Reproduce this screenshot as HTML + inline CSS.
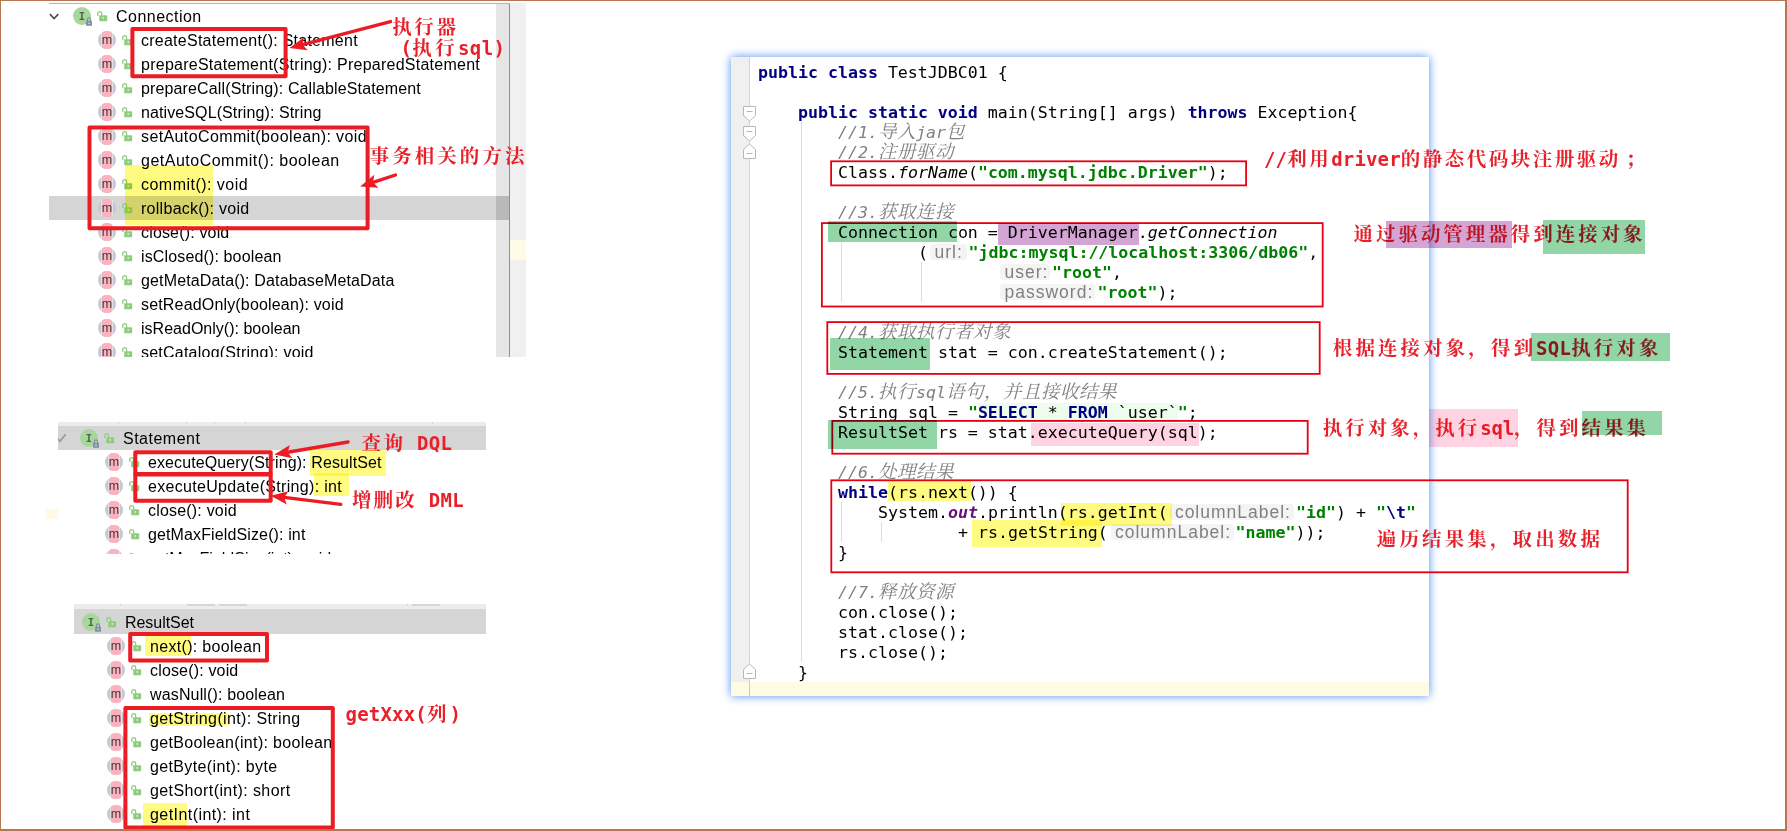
<!DOCTYPE html>
<html lang="zh-CN"><head><meta charset="utf-8"><title>JDBC API notes</title>
<style>
html,body{margin:0;padding:0}
body{width:1787px;height:831px;position:relative;overflow:hidden;background:#fff;font-family:"Liberation Sans","Noto Sans CJK SC",sans-serif}
.abs,.abs *{box-sizing:border-box}
.p{position:absolute;overflow:hidden}
.p div,.p span,.p svg{position:absolute}
.row{height:24px;line-height:24px;white-space:pre;font-size:16px;color:#000}
.t{top:0;height:24px;line-height:24px;white-space:pre}
.code{font-family:"DejaVu Sans Mono","Liberation Mono",monospace;font-size:16.6px;line-height:20px;height:20px;white-space:pre;color:#000}
.code span{position:static}
.code b{font-weight:bold}
.k{color:#000080;font-weight:bold}
.s{color:#008000;font-weight:bold}
.c{color:#808080;font-style:italic}
.cj{font-family:"Liberation Serif","Noto Serif CJK SC",serif;font-size:18.5px;letter-spacing:.5px;line-height:0}
.i{font-style:italic}
.o{color:#660e7a;font-weight:bold;font-style:italic}
.hint{font-family:"Liberation Sans",sans-serif;font-size:17.5px;color:#808080;background:#f4f4f4;border-radius:4px;height:15.8px;line-height:17.5px;white-space:pre;padding-left:4.5px}
.an{position:absolute;font-family:"Liberation Serif","Noto Serif CJK SC",serif;font-weight:bold;color:#e8202a;white-space:pre;line-height:24px;height:24px}
.an span{font-family:"DejaVu Sans Mono","Liberation Mono",monospace;font-weight:bold;font-size:19px;line-height:0}
.an i{font-style:normal;margin-left:5px}
.hl{position:absolute;mix-blend-mode:multiply}
.ov{position:absolute;left:0;top:0}
</style></head><body>


<div class="p abs" style="left:49px;top:3px;width:477px;height:354px;background:#fff">
<div style="left:0;top:193px;width:461px;height:24px;background:#d5d5d5"></div>
<div style="left:447px;top:0;width:14px;height:354px;background:#e6e6e6"></div>
<div style="left:447px;top:193px;width:14px;height:24px;background:#b9b9b9"></div>
<div style="left:460px;top:0;width:1px;height:354px;background:#8f8f8f"></div>
<div style="left:461px;top:0;width:16px;height:354px;background:#f0f0f0"></div>
<div style="left:461px;top:237px;width:16px;height:19.5px;background:#fffae3"></div>
<div style="left:0;top:0;width:461px;height:1px;background:#b4b4b4"></div>
<svg style="left:0;top:7px" width="12" height="12"><path d="M.9 4.2 5.1 8.6 9.3 4.2" fill="none" stroke="#4d4d4d" stroke-width="1.7"/></svg>
<svg style="left:24px;top:4px" width="22" height="22"><circle cx="9" cy="9" r="9" fill="#a9d69d"/><text x="9" y="13" font-family="DejaVu Sans Mono,Liberation Mono,monospace" font-weight="bold" font-size="10.5" text-anchor="middle" fill="#4e6350">I</text><rect x="13" y="13.8" width="6" height="5" rx=".4" fill="#7f91a3"/><path d="M14.4 14v-1.6a1.6 1.6 0 0 1 3.2 0V14" stroke="#7f91a3" fill="none" stroke-width="1.2"/><rect x="15.5" y="15.6" width="1" height="1.4" fill="#fff"/></svg><svg style="left:47.5px;top:7.6px" width="12" height="12"><rect x="2.2" y="4.2" width="8" height="6" rx=".8" fill="#8fcc7e"/><path d="M.8 5V2.6a1.9 1.9 0 0 1 3.8 0V4.4" stroke="#8fcc7e" fill="none" stroke-width="1.3"/><rect x="5.6" y="6.3" width="1.3" height="1.3" fill="#fff"/></svg><span class="row" id="r1h" style="left:67px;top:1.5px;letter-spacing:0.478px">Connection</span>
<svg style="left:49px;top:28px" width="18" height="18"><circle cx="9" cy="9" r="9" fill="#c3cad2"/><path d="M3.65 1V17M14.35 1V17" stroke="#fff" stroke-width=".6"/><path d="M3.9 1.585A9 9 0 0 1 14.1 1.585V16.415A9 9 0 0 1 3.9 16.415z" fill="#f9b3bf"/><text x="9" y="13" font-family="Liberation Sans,sans-serif" font-size="12.5" text-anchor="middle" fill="#45363a">m</text></svg><svg style="left:72.5px;top:31.6px" width="12" height="12"><rect x="2.2" y="4.2" width="8" height="6" rx=".8" fill="#8fcc7e"/><path d="M.8 5V2.6a1.9 1.9 0 0 1 3.8 0V4.4" stroke="#8fcc7e" fill="none" stroke-width="1.3"/><rect x="5.6" y="6.3" width="1.3" height="1.3" fill="#fff"/></svg><span class="row" id="r1_0" style="left:92px;top:25.5px;letter-spacing:0.248px">createStatement(): Statement</span>
<svg style="left:49px;top:52px" width="18" height="18"><circle cx="9" cy="9" r="9" fill="#c3cad2"/><path d="M3.65 1V17M14.35 1V17" stroke="#fff" stroke-width=".6"/><path d="M3.9 1.585A9 9 0 0 1 14.1 1.585V16.415A9 9 0 0 1 3.9 16.415z" fill="#f9b3bf"/><text x="9" y="13" font-family="Liberation Sans,sans-serif" font-size="12.5" text-anchor="middle" fill="#45363a">m</text></svg><svg style="left:72.5px;top:55.6px" width="12" height="12"><rect x="2.2" y="4.2" width="8" height="6" rx=".8" fill="#8fcc7e"/><path d="M.8 5V2.6a1.9 1.9 0 0 1 3.8 0V4.4" stroke="#8fcc7e" fill="none" stroke-width="1.3"/><rect x="5.6" y="6.3" width="1.3" height="1.3" fill="#fff"/></svg><span class="row" id="r1_1" style="left:92px;top:49.5px;letter-spacing:0.252px">prepareStatement(String): PreparedStatement</span>
<svg style="left:49px;top:76px" width="18" height="18"><circle cx="9" cy="9" r="9" fill="#c3cad2"/><path d="M3.65 1V17M14.35 1V17" stroke="#fff" stroke-width=".6"/><path d="M3.9 1.585A9 9 0 0 1 14.1 1.585V16.415A9 9 0 0 1 3.9 16.415z" fill="#f9b3bf"/><text x="9" y="13" font-family="Liberation Sans,sans-serif" font-size="12.5" text-anchor="middle" fill="#45363a">m</text></svg><svg style="left:72.5px;top:79.6px" width="12" height="12"><rect x="2.2" y="4.2" width="8" height="6" rx=".8" fill="#8fcc7e"/><path d="M.8 5V2.6a1.9 1.9 0 0 1 3.8 0V4.4" stroke="#8fcc7e" fill="none" stroke-width="1.3"/><rect x="5.6" y="6.3" width="1.3" height="1.3" fill="#fff"/></svg><span class="row" id="r1_2" style="left:92px;top:73.5px;letter-spacing:0.135px">prepareCall(String): CallableStatement</span>
<svg style="left:49px;top:100px" width="18" height="18"><circle cx="9" cy="9" r="9" fill="#c3cad2"/><path d="M3.65 1V17M14.35 1V17" stroke="#fff" stroke-width=".6"/><path d="M3.9 1.585A9 9 0 0 1 14.1 1.585V16.415A9 9 0 0 1 3.9 16.415z" fill="#f9b3bf"/><text x="9" y="13" font-family="Liberation Sans,sans-serif" font-size="12.5" text-anchor="middle" fill="#45363a">m</text></svg><svg style="left:72.5px;top:103.6px" width="12" height="12"><rect x="2.2" y="4.2" width="8" height="6" rx=".8" fill="#8fcc7e"/><path d="M.8 5V2.6a1.9 1.9 0 0 1 3.8 0V4.4" stroke="#8fcc7e" fill="none" stroke-width="1.3"/><rect x="5.6" y="6.3" width="1.3" height="1.3" fill="#fff"/></svg><span class="row" id="r1_3" style="left:92px;top:97.5px;letter-spacing:0.104px">nativeSQL(String): String</span>
<svg style="left:49px;top:124px" width="18" height="18"><circle cx="9" cy="9" r="9" fill="#c3cad2"/><path d="M3.65 1V17M14.35 1V17" stroke="#fff" stroke-width=".6"/><path d="M3.9 1.585A9 9 0 0 1 14.1 1.585V16.415A9 9 0 0 1 3.9 16.415z" fill="#f9b3bf"/><text x="9" y="13" font-family="Liberation Sans,sans-serif" font-size="12.5" text-anchor="middle" fill="#45363a">m</text></svg><svg style="left:72.5px;top:127.6px" width="12" height="12"><rect x="2.2" y="4.2" width="8" height="6" rx=".8" fill="#8fcc7e"/><path d="M.8 5V2.6a1.9 1.9 0 0 1 3.8 0V4.4" stroke="#8fcc7e" fill="none" stroke-width="1.3"/><rect x="5.6" y="6.3" width="1.3" height="1.3" fill="#fff"/></svg><span class="row" id="r1_4" style="left:92px;top:121.5px;letter-spacing:0.385px">setAutoCommit(boolean): void</span>
<svg style="left:49px;top:148px" width="18" height="18"><circle cx="9" cy="9" r="9" fill="#c3cad2"/><path d="M3.65 1V17M14.35 1V17" stroke="#fff" stroke-width=".6"/><path d="M3.9 1.585A9 9 0 0 1 14.1 1.585V16.415A9 9 0 0 1 3.9 16.415z" fill="#f9b3bf"/><text x="9" y="13" font-family="Liberation Sans,sans-serif" font-size="12.5" text-anchor="middle" fill="#45363a">m</text></svg><svg style="left:72.5px;top:151.6px" width="12" height="12"><rect x="2.2" y="4.2" width="8" height="6" rx=".8" fill="#8fcc7e"/><path d="M.8 5V2.6a1.9 1.9 0 0 1 3.8 0V4.4" stroke="#8fcc7e" fill="none" stroke-width="1.3"/><rect x="5.6" y="6.3" width="1.3" height="1.3" fill="#fff"/></svg><span class="row" id="r1_5" style="left:92px;top:145.5px;letter-spacing:0.500px">getAutoCommit(): boolean</span>
<svg style="left:49px;top:172px" width="18" height="18"><circle cx="9" cy="9" r="9" fill="#c3cad2"/><path d="M3.65 1V17M14.35 1V17" stroke="#fff" stroke-width=".6"/><path d="M3.9 1.585A9 9 0 0 1 14.1 1.585V16.415A9 9 0 0 1 3.9 16.415z" fill="#f9b3bf"/><text x="9" y="13" font-family="Liberation Sans,sans-serif" font-size="12.5" text-anchor="middle" fill="#45363a">m</text></svg><svg style="left:72.5px;top:175.6px" width="12" height="12"><rect x="2.2" y="4.2" width="8" height="6" rx=".8" fill="#8fcc7e"/><path d="M.8 5V2.6a1.9 1.9 0 0 1 3.8 0V4.4" stroke="#8fcc7e" fill="none" stroke-width="1.3"/><rect x="5.6" y="6.3" width="1.3" height="1.3" fill="#fff"/></svg><span class="row" id="r1_6" style="left:92px;top:169.5px;letter-spacing:0.477px">commit(): void</span>
<svg style="left:49px;top:196px" width="18" height="18"><circle cx="9" cy="9" r="9" fill="#c3cad2"/><path d="M3.65 1V17M14.35 1V17" stroke="#fff" stroke-width=".6"/><path d="M3.9 1.585A9 9 0 0 1 14.1 1.585V16.415A9 9 0 0 1 3.9 16.415z" fill="#f9b3bf"/><text x="9" y="13" font-family="Liberation Sans,sans-serif" font-size="12.5" text-anchor="middle" fill="#45363a">m</text></svg><svg style="left:72.5px;top:199.6px" width="12" height="12"><rect x="2.2" y="4.2" width="8" height="6" rx=".8" fill="#8fcc7e"/><path d="M.8 5V2.6a1.9 1.9 0 0 1 3.8 0V4.4" stroke="#8fcc7e" fill="none" stroke-width="1.3"/><rect x="5.6" y="6.3" width="1.3" height="1.3" fill="#fff"/></svg><span class="row" id="r1_7" style="left:92px;top:193.5px;letter-spacing:0.280px">rollback(): void</span>
<svg style="left:49px;top:220px" width="18" height="18"><circle cx="9" cy="9" r="9" fill="#c3cad2"/><path d="M3.65 1V17M14.35 1V17" stroke="#fff" stroke-width=".6"/><path d="M3.9 1.585A9 9 0 0 1 14.1 1.585V16.415A9 9 0 0 1 3.9 16.415z" fill="#f9b3bf"/><text x="9" y="13" font-family="Liberation Sans,sans-serif" font-size="12.5" text-anchor="middle" fill="#45363a">m</text></svg><svg style="left:72.5px;top:223.6px" width="12" height="12"><rect x="2.2" y="4.2" width="8" height="6" rx=".8" fill="#8fcc7e"/><path d="M.8 5V2.6a1.9 1.9 0 0 1 3.8 0V4.4" stroke="#8fcc7e" fill="none" stroke-width="1.3"/><rect x="5.6" y="6.3" width="1.3" height="1.3" fill="#fff"/></svg><span class="row" id="r1_8" style="left:92px;top:217.5px;letter-spacing:0.167px">close(): void</span>
<svg style="left:49px;top:244px" width="18" height="18"><circle cx="9" cy="9" r="9" fill="#c3cad2"/><path d="M3.65 1V17M14.35 1V17" stroke="#fff" stroke-width=".6"/><path d="M3.9 1.585A9 9 0 0 1 14.1 1.585V16.415A9 9 0 0 1 3.9 16.415z" fill="#f9b3bf"/><text x="9" y="13" font-family="Liberation Sans,sans-serif" font-size="12.5" text-anchor="middle" fill="#45363a">m</text></svg><svg style="left:72.5px;top:247.6px" width="12" height="12"><rect x="2.2" y="4.2" width="8" height="6" rx=".8" fill="#8fcc7e"/><path d="M.8 5V2.6a1.9 1.9 0 0 1 3.8 0V4.4" stroke="#8fcc7e" fill="none" stroke-width="1.3"/><rect x="5.6" y="6.3" width="1.3" height="1.3" fill="#fff"/></svg><span class="row" id="r1_9" style="left:92px;top:241.5px;letter-spacing:0.139px">isClosed(): boolean</span>
<svg style="left:49px;top:268px" width="18" height="18"><circle cx="9" cy="9" r="9" fill="#c3cad2"/><path d="M3.65 1V17M14.35 1V17" stroke="#fff" stroke-width=".6"/><path d="M3.9 1.585A9 9 0 0 1 14.1 1.585V16.415A9 9 0 0 1 3.9 16.415z" fill="#f9b3bf"/><text x="9" y="13" font-family="Liberation Sans,sans-serif" font-size="12.5" text-anchor="middle" fill="#45363a">m</text></svg><svg style="left:72.5px;top:271.6px" width="12" height="12"><rect x="2.2" y="4.2" width="8" height="6" rx=".8" fill="#8fcc7e"/><path d="M.8 5V2.6a1.9 1.9 0 0 1 3.8 0V4.4" stroke="#8fcc7e" fill="none" stroke-width="1.3"/><rect x="5.6" y="6.3" width="1.3" height="1.3" fill="#fff"/></svg><span class="row" id="r1_10" style="left:92px;top:265.5px;letter-spacing:0.143px">getMetaData(): DatabaseMetaData</span>
<svg style="left:49px;top:292px" width="18" height="18"><circle cx="9" cy="9" r="9" fill="#c3cad2"/><path d="M3.65 1V17M14.35 1V17" stroke="#fff" stroke-width=".6"/><path d="M3.9 1.585A9 9 0 0 1 14.1 1.585V16.415A9 9 0 0 1 3.9 16.415z" fill="#f9b3bf"/><text x="9" y="13" font-family="Liberation Sans,sans-serif" font-size="12.5" text-anchor="middle" fill="#45363a">m</text></svg><svg style="left:72.5px;top:295.6px" width="12" height="12"><rect x="2.2" y="4.2" width="8" height="6" rx=".8" fill="#8fcc7e"/><path d="M.8 5V2.6a1.9 1.9 0 0 1 3.8 0V4.4" stroke="#8fcc7e" fill="none" stroke-width="1.3"/><rect x="5.6" y="6.3" width="1.3" height="1.3" fill="#fff"/></svg><span class="row" id="r1_11" style="left:92px;top:289.5px;letter-spacing:0.168px">setReadOnly(boolean): void</span>
<svg style="left:49px;top:316px" width="18" height="18"><circle cx="9" cy="9" r="9" fill="#c3cad2"/><path d="M3.65 1V17M14.35 1V17" stroke="#fff" stroke-width=".6"/><path d="M3.9 1.585A9 9 0 0 1 14.1 1.585V16.415A9 9 0 0 1 3.9 16.415z" fill="#f9b3bf"/><text x="9" y="13" font-family="Liberation Sans,sans-serif" font-size="12.5" text-anchor="middle" fill="#45363a">m</text></svg><svg style="left:72.5px;top:319.6px" width="12" height="12"><rect x="2.2" y="4.2" width="8" height="6" rx=".8" fill="#8fcc7e"/><path d="M.8 5V2.6a1.9 1.9 0 0 1 3.8 0V4.4" stroke="#8fcc7e" fill="none" stroke-width="1.3"/><rect x="5.6" y="6.3" width="1.3" height="1.3" fill="#fff"/></svg><span class="row" id="r1_12" style="left:92px;top:313.5px;letter-spacing:0.015px">isReadOnly(): boolean</span>
<svg style="left:49px;top:340px" width="18" height="18"><circle cx="9" cy="9" r="9" fill="#c3cad2"/><path d="M3.65 1V17M14.35 1V17" stroke="#fff" stroke-width=".6"/><path d="M3.9 1.585A9 9 0 0 1 14.1 1.585V16.415A9 9 0 0 1 3.9 16.415z" fill="#f9b3bf"/><text x="9" y="13" font-family="Liberation Sans,sans-serif" font-size="12.5" text-anchor="middle" fill="#45363a">m</text></svg><svg style="left:72.5px;top:343.6px" width="12" height="12"><rect x="2.2" y="4.2" width="8" height="6" rx=".8" fill="#8fcc7e"/><path d="M.8 5V2.6a1.9 1.9 0 0 1 3.8 0V4.4" stroke="#8fcc7e" fill="none" stroke-width="1.3"/><rect x="5.6" y="6.3" width="1.3" height="1.3" fill="#fff"/></svg><span class="row" id="r1_13" style="left:92px;top:337.5px;letter-spacing:0.230px">setCatalog(String): void</span>
</div>
<div class="p abs" style="left:58px;top:422px;width:428px;height:132px;background:#fff">
<div style="left:0;top:0;width:428px;height:4px;background:#ececec"></div>
<div style="left:60px;top:0;width:1px;height:2px;background:#d2d2d2"></div>
<div style="left:128px;top:0;width:1px;height:2px;background:#d2d2d2"></div>
<div style="left:156px;top:0;width:1px;height:2px;background:#d2d2d2"></div>
<div style="left:187px;top:0;width:1px;height:2px;background:#d2d2d2"></div>
<div style="left:374px;top:0;width:1px;height:2px;background:#d2d2d2"></div>
<div style="left:0;top:3.5px;width:428px;height:24.3px;background:#d5d5d5"></div>
<svg style="left:0;top:10px" width="12" height="12"><path d="M-1 6 2 9.2 7.6 2.4" fill="none" stroke="#9a9a9a" stroke-width="1.7"/></svg>
<svg style="left:22px;top:7.300000000000011px" width="22" height="22"><circle cx="9" cy="9" r="9" fill="#a9d69d"/><text x="9" y="13" font-family="DejaVu Sans Mono,Liberation Mono,monospace" font-weight="bold" font-size="10.5" text-anchor="middle" fill="#4e6350">I</text><rect x="13" y="13.8" width="6" height="5" rx=".4" fill="#7f91a3"/><path d="M14.4 14v-1.6a1.6 1.6 0 0 1 3.2 0V14" stroke="#7f91a3" fill="none" stroke-width="1.2"/><rect x="15.5" y="15.6" width="1" height="1.4" fill="#fff"/></svg><svg style="left:45.5px;top:10.900000000000034px" width="12" height="12"><rect x="2.2" y="4.2" width="8" height="6" rx=".8" fill="#8fcc7e"/><path d="M.8 5V2.6a1.9 1.9 0 0 1 3.8 0V4.4" stroke="#8fcc7e" fill="none" stroke-width="1.3"/><rect x="5.6" y="6.3" width="1.3" height="1.3" fill="#fff"/></svg><span class="row" id="r2h" style="left:65px;top:4.800000000000011px;letter-spacing:0.500px">Statement</span>
<svg style="left:47px;top:31px" width="18" height="18"><circle cx="9" cy="9" r="9" fill="#c3cad2"/><path d="M3.65 1V17M14.35 1V17" stroke="#fff" stroke-width=".6"/><path d="M3.9 1.585A9 9 0 0 1 14.1 1.585V16.415A9 9 0 0 1 3.9 16.415z" fill="#f9b3bf"/><text x="9" y="13" font-family="Liberation Sans,sans-serif" font-size="12.5" text-anchor="middle" fill="#45363a">m</text></svg><svg style="left:70.5px;top:34.60000000000002px" width="12" height="12"><rect x="2.2" y="4.2" width="8" height="6" rx=".8" fill="#8fcc7e"/><path d="M.8 5V2.6a1.9 1.9 0 0 1 3.8 0V4.4" stroke="#8fcc7e" fill="none" stroke-width="1.3"/><rect x="5.6" y="6.3" width="1.3" height="1.3" fill="#fff"/></svg><span class="row" id="r2_0" style="left:90px;top:28.5px;letter-spacing:0.103px">executeQuery(String): ResultSet</span>
<svg style="left:47px;top:55px" width="18" height="18"><circle cx="9" cy="9" r="9" fill="#c3cad2"/><path d="M3.65 1V17M14.35 1V17" stroke="#fff" stroke-width=".6"/><path d="M3.9 1.585A9 9 0 0 1 14.1 1.585V16.415A9 9 0 0 1 3.9 16.415z" fill="#f9b3bf"/><text x="9" y="13" font-family="Liberation Sans,sans-serif" font-size="12.5" text-anchor="middle" fill="#45363a">m</text></svg><svg style="left:70.5px;top:58.60000000000002px" width="12" height="12"><rect x="2.2" y="4.2" width="8" height="6" rx=".8" fill="#8fcc7e"/><path d="M.8 5V2.6a1.9 1.9 0 0 1 3.8 0V4.4" stroke="#8fcc7e" fill="none" stroke-width="1.3"/><rect x="5.6" y="6.3" width="1.3" height="1.3" fill="#fff"/></svg><span class="row" id="r2_1" style="left:90px;top:52.5px;letter-spacing:0.312px">executeUpdate(String): int</span>
<svg style="left:47px;top:79px" width="18" height="18"><circle cx="9" cy="9" r="9" fill="#c3cad2"/><path d="M3.65 1V17M14.35 1V17" stroke="#fff" stroke-width=".6"/><path d="M3.9 1.585A9 9 0 0 1 14.1 1.585V16.415A9 9 0 0 1 3.9 16.415z" fill="#f9b3bf"/><text x="9" y="13" font-family="Liberation Sans,sans-serif" font-size="12.5" text-anchor="middle" fill="#45363a">m</text></svg><svg style="left:70.5px;top:82.60000000000002px" width="12" height="12"><rect x="2.2" y="4.2" width="8" height="6" rx=".8" fill="#8fcc7e"/><path d="M.8 5V2.6a1.9 1.9 0 0 1 3.8 0V4.4" stroke="#8fcc7e" fill="none" stroke-width="1.3"/><rect x="5.6" y="6.3" width="1.3" height="1.3" fill="#fff"/></svg><span class="row" id="r2_2" style="left:90px;top:76.5px;letter-spacing:0.192px">close(): void</span>
<svg style="left:47px;top:103px" width="18" height="18"><circle cx="9" cy="9" r="9" fill="#c3cad2"/><path d="M3.65 1V17M14.35 1V17" stroke="#fff" stroke-width=".6"/><path d="M3.9 1.585A9 9 0 0 1 14.1 1.585V16.415A9 9 0 0 1 3.9 16.415z" fill="#f9b3bf"/><text x="9" y="13" font-family="Liberation Sans,sans-serif" font-size="12.5" text-anchor="middle" fill="#45363a">m</text></svg><svg style="left:70.5px;top:106.60000000000002px" width="12" height="12"><rect x="2.2" y="4.2" width="8" height="6" rx=".8" fill="#8fcc7e"/><path d="M.8 5V2.6a1.9 1.9 0 0 1 3.8 0V4.4" stroke="#8fcc7e" fill="none" stroke-width="1.3"/><rect x="5.6" y="6.3" width="1.3" height="1.3" fill="#fff"/></svg><span class="row" id="r2_3" style="left:90px;top:100.5px;letter-spacing:0.124px">getMaxFieldSize(): int</span>
<svg style="left:47px;top:127px" width="18" height="18"><circle cx="9" cy="9" r="9" fill="#c3cad2"/><path d="M3.65 1V17M14.35 1V17" stroke="#fff" stroke-width=".6"/><path d="M3.9 1.585A9 9 0 0 1 14.1 1.585V16.415A9 9 0 0 1 3.9 16.415z" fill="#f9b3bf"/><text x="9" y="13" font-family="Liberation Sans,sans-serif" font-size="12.5" text-anchor="middle" fill="#45363a">m</text></svg><svg style="left:70.5px;top:130.60000000000002px" width="12" height="12"><rect x="2.2" y="4.2" width="8" height="6" rx=".8" fill="#8fcc7e"/><path d="M.8 5V2.6a1.9 1.9 0 0 1 3.8 0V4.4" stroke="#8fcc7e" fill="none" stroke-width="1.3"/><rect x="5.6" y="6.3" width="1.3" height="1.3" fill="#fff"/></svg><span class="row" id="r2_4" style="left:90px;top:124.5px">setMaxFieldSize(int): void</span>
</div>
<div class="abs" style="position:absolute;left:46px;top:509px;width:12px;height:10px;background:#fffae3"></div>
<div class="p abs" style="left:74px;top:604px;width:412px;height:225px;background:#fff">
<div style="left:0;top:0;width:412px;height:5.5px;background:#ececec"></div>
<div style="left:46px;top:0;width:1px;height:2px;background:#d6d6d6"></div>
<div style="left:113px;top:0;width:28px;height:2px;background:#d6d6d6"></div>
<div style="left:145px;top:0;width:28px;height:2px;background:#d6d6d6"></div>
<div style="left:333px;top:0;width:1px;height:2px;background:#d6d6d6"></div>
<div style="left:338px;top:0;width:28px;height:2px;background:#d6d6d6"></div>
<div style="left:0;top:5px;width:412px;height:24.5px;background:#d5d5d5"></div>
<svg style="left:8px;top:9.200000000000045px" width="22" height="22"><circle cx="9" cy="9" r="9" fill="#a9d69d"/><text x="9" y="13" font-family="DejaVu Sans Mono,Liberation Mono,monospace" font-weight="bold" font-size="10.5" text-anchor="middle" fill="#4e6350">I</text><rect x="13" y="13.8" width="6" height="5" rx=".4" fill="#7f91a3"/><path d="M14.4 14v-1.6a1.6 1.6 0 0 1 3.2 0V14" stroke="#7f91a3" fill="none" stroke-width="1.2"/><rect x="15.5" y="15.6" width="1" height="1.4" fill="#fff"/></svg><svg style="left:31.5px;top:12.800000000000068px" width="12" height="12"><rect x="2.2" y="4.2" width="8" height="6" rx=".8" fill="#8fcc7e"/><path d="M.8 5V2.6a1.9 1.9 0 0 1 3.8 0V4.4" stroke="#8fcc7e" fill="none" stroke-width="1.3"/><rect x="5.6" y="6.3" width="1.3" height="1.3" fill="#fff"/></svg><span class="row" id="r3h" style="left:51px;top:6.7000000000000455px;letter-spacing:-0.050px">ResultSet</span>
<svg style="left:33px;top:33px" width="18" height="18"><circle cx="9" cy="9" r="9" fill="#c3cad2"/><path d="M3.65 1V17M14.35 1V17" stroke="#fff" stroke-width=".6"/><path d="M3.9 1.585A9 9 0 0 1 14.1 1.585V16.415A9 9 0 0 1 3.9 16.415z" fill="#f9b3bf"/><text x="9" y="13" font-family="Liberation Sans,sans-serif" font-size="12.5" text-anchor="middle" fill="#45363a">m</text></svg><svg style="left:56.5px;top:36.60000000000002px" width="12" height="12"><rect x="2.2" y="4.2" width="8" height="6" rx=".8" fill="#8fcc7e"/><path d="M.8 5V2.6a1.9 1.9 0 0 1 3.8 0V4.4" stroke="#8fcc7e" fill="none" stroke-width="1.3"/><rect x="5.6" y="6.3" width="1.3" height="1.3" fill="#fff"/></svg><span class="row" id="r3_0" style="left:76px;top:30.5px;letter-spacing:0.314px">next(): boolean</span>
<svg style="left:33px;top:57px" width="18" height="18"><circle cx="9" cy="9" r="9" fill="#c3cad2"/><path d="M3.65 1V17M14.35 1V17" stroke="#fff" stroke-width=".6"/><path d="M3.9 1.585A9 9 0 0 1 14.1 1.585V16.415A9 9 0 0 1 3.9 16.415z" fill="#f9b3bf"/><text x="9" y="13" font-family="Liberation Sans,sans-serif" font-size="12.5" text-anchor="middle" fill="#45363a">m</text></svg><svg style="left:56.5px;top:60.60000000000002px" width="12" height="12"><rect x="2.2" y="4.2" width="8" height="6" rx=".8" fill="#8fcc7e"/><path d="M.8 5V2.6a1.9 1.9 0 0 1 3.8 0V4.4" stroke="#8fcc7e" fill="none" stroke-width="1.3"/><rect x="5.6" y="6.3" width="1.3" height="1.3" fill="#fff"/></svg><span class="row" id="r3_1" style="left:76px;top:54.5px;letter-spacing:0.167px">close(): void</span>
<svg style="left:33px;top:81px" width="18" height="18"><circle cx="9" cy="9" r="9" fill="#c3cad2"/><path d="M3.65 1V17M14.35 1V17" stroke="#fff" stroke-width=".6"/><path d="M3.9 1.585A9 9 0 0 1 14.1 1.585V16.415A9 9 0 0 1 3.9 16.415z" fill="#f9b3bf"/><text x="9" y="13" font-family="Liberation Sans,sans-serif" font-size="12.5" text-anchor="middle" fill="#45363a">m</text></svg><svg style="left:56.5px;top:84.60000000000002px" width="12" height="12"><rect x="2.2" y="4.2" width="8" height="6" rx=".8" fill="#8fcc7e"/><path d="M.8 5V2.6a1.9 1.9 0 0 1 3.8 0V4.4" stroke="#8fcc7e" fill="none" stroke-width="1.3"/><rect x="5.6" y="6.3" width="1.3" height="1.3" fill="#fff"/></svg><span class="row" id="r3_2" style="left:76px;top:78.5px;letter-spacing:0.147px">wasNull(): boolean</span>
<svg style="left:33px;top:105px" width="18" height="18"><circle cx="9" cy="9" r="9" fill="#c3cad2"/><path d="M3.65 1V17M14.35 1V17" stroke="#fff" stroke-width=".6"/><path d="M3.9 1.585A9 9 0 0 1 14.1 1.585V16.415A9 9 0 0 1 3.9 16.415z" fill="#f9b3bf"/><text x="9" y="13" font-family="Liberation Sans,sans-serif" font-size="12.5" text-anchor="middle" fill="#45363a">m</text></svg><svg style="left:56.5px;top:108.60000000000002px" width="12" height="12"><rect x="2.2" y="4.2" width="8" height="6" rx=".8" fill="#8fcc7e"/><path d="M.8 5V2.6a1.9 1.9 0 0 1 3.8 0V4.4" stroke="#8fcc7e" fill="none" stroke-width="1.3"/><rect x="5.6" y="6.3" width="1.3" height="1.3" fill="#fff"/></svg><span class="row" id="r3_3" style="left:76px;top:102.5px;letter-spacing:0.371px">getString(int): String</span>
<svg style="left:33px;top:129px" width="18" height="18"><circle cx="9" cy="9" r="9" fill="#c3cad2"/><path d="M3.65 1V17M14.35 1V17" stroke="#fff" stroke-width=".6"/><path d="M3.9 1.585A9 9 0 0 1 14.1 1.585V16.415A9 9 0 0 1 3.9 16.415z" fill="#f9b3bf"/><text x="9" y="13" font-family="Liberation Sans,sans-serif" font-size="12.5" text-anchor="middle" fill="#45363a">m</text></svg><svg style="left:56.5px;top:132.60000000000002px" width="12" height="12"><rect x="2.2" y="4.2" width="8" height="6" rx=".8" fill="#8fcc7e"/><path d="M.8 5V2.6a1.9 1.9 0 0 1 3.8 0V4.4" stroke="#8fcc7e" fill="none" stroke-width="1.3"/><rect x="5.6" y="6.3" width="1.3" height="1.3" fill="#fff"/></svg><span class="row" id="r3_4" style="left:76px;top:126.5px;letter-spacing:0.335px">getBoolean(int): boolean</span>
<svg style="left:33px;top:153px" width="18" height="18"><circle cx="9" cy="9" r="9" fill="#c3cad2"/><path d="M3.65 1V17M14.35 1V17" stroke="#fff" stroke-width=".6"/><path d="M3.9 1.585A9 9 0 0 1 14.1 1.585V16.415A9 9 0 0 1 3.9 16.415z" fill="#f9b3bf"/><text x="9" y="13" font-family="Liberation Sans,sans-serif" font-size="12.5" text-anchor="middle" fill="#45363a">m</text></svg><svg style="left:56.5px;top:156.60000000000002px" width="12" height="12"><rect x="2.2" y="4.2" width="8" height="6" rx=".8" fill="#8fcc7e"/><path d="M.8 5V2.6a1.9 1.9 0 0 1 3.8 0V4.4" stroke="#8fcc7e" fill="none" stroke-width="1.3"/><rect x="5.6" y="6.3" width="1.3" height="1.3" fill="#fff"/></svg><span class="row" id="r3_5" style="left:76px;top:150.5px;letter-spacing:0.365px">getByte(int): byte</span>
<svg style="left:33px;top:177px" width="18" height="18"><circle cx="9" cy="9" r="9" fill="#c3cad2"/><path d="M3.65 1V17M14.35 1V17" stroke="#fff" stroke-width=".6"/><path d="M3.9 1.585A9 9 0 0 1 14.1 1.585V16.415A9 9 0 0 1 3.9 16.415z" fill="#f9b3bf"/><text x="9" y="13" font-family="Liberation Sans,sans-serif" font-size="12.5" text-anchor="middle" fill="#45363a">m</text></svg><svg style="left:56.5px;top:180.60000000000002px" width="12" height="12"><rect x="2.2" y="4.2" width="8" height="6" rx=".8" fill="#8fcc7e"/><path d="M.8 5V2.6a1.9 1.9 0 0 1 3.8 0V4.4" stroke="#8fcc7e" fill="none" stroke-width="1.3"/><rect x="5.6" y="6.3" width="1.3" height="1.3" fill="#fff"/></svg><span class="row" id="r3_6" style="left:76px;top:174.5px;letter-spacing:0.400px">getShort(int): short</span>
<svg style="left:33px;top:201px" width="18" height="18"><circle cx="9" cy="9" r="9" fill="#c3cad2"/><path d="M3.65 1V17M14.35 1V17" stroke="#fff" stroke-width=".6"/><path d="M3.9 1.585A9 9 0 0 1 14.1 1.585V16.415A9 9 0 0 1 3.9 16.415z" fill="#f9b3bf"/><text x="9" y="13" font-family="Liberation Sans,sans-serif" font-size="12.5" text-anchor="middle" fill="#45363a">m</text></svg><svg style="left:56.5px;top:204.60000000000002px" width="12" height="12"><rect x="2.2" y="4.2" width="8" height="6" rx=".8" fill="#8fcc7e"/><path d="M.8 5V2.6a1.9 1.9 0 0 1 3.8 0V4.4" stroke="#8fcc7e" fill="none" stroke-width="1.3"/><rect x="5.6" y="6.3" width="1.3" height="1.3" fill="#fff"/></svg><span class="row" id="r3_7" style="left:76px;top:198.5px;letter-spacing:0.433px">getInt(int): int</span>
</div>
<div class="p abs" style="left:731px;top:57px;width:698px;height:639px;background:#fff;overflow:visible;box-shadow:0 0 9px 0 #4a90f5">
<div style="left:0;top:0;width:698px;height:639px;overflow:hidden">
<div style="left:0;top:0;width:18px;height:639px;background:#f0f0f0"></div>
<div style="left:18px;top:0;width:1px;height:639px;background:#d4d4d4"></div>
<div style="left:0;top:625px;width:698px;height:14px;background:#fffae3"></div>
<div style="left:18px;top:625px;width:1px;height:14px;background:#c9c9c9"></div>
<div style="left:69.5px;top:65px;width:1px;height:540px;background:#dcdcdc"></div>
<div style="left:109.5px;top:185px;width:1px;height:60px;background:#dcdcdc"></div>
<div style="left:189.5px;top:205px;width:1px;height:40px;background:#dcdcdc"></div>
<div style="left:109.5px;top:445px;width:1px;height:40px;background:#dcdcdc"></div>
<div style="left:149.5px;top:465px;width:1px;height:20px;background:#dcdcdc"></div>
<svg style="left:0;top:0" width="40" height="639" fill="#fff" stroke="#b8b8b8" stroke-width="1">
<path d="M12.5 49.5h12v9l-6 5.5l-6-5.5z M15.5 54.5h6"/>
<path d="M12.5 69.5h12v9l-6 5.5l-6-5.5z M15.5 74.5h6"/>
<path d="M12.5 101.5h12v-9l-6-5.5l-6 5.5z M15.5 96.5h6"/>
<path d="M12.5 621.5h12v-9l-6-5.5l-6 5.5z M15.5 616.5h6"/>
</svg>
<div class="code" style="left:27px;top:6px;"><span class="k">public class</span> TestJDBC01 {</div>
<div class="code" style="left:67px;top:46px;"><span class="k">public static void</span> main(String[] args) <span class="k">throws</span> Exception{</div>
<div class="code" style="left:107px;top:66px;"><span class="c">//1.<span class="cj">导入</span>jar<span class="cj">包</span></span></div>
<div class="code" style="left:107px;top:86px;"><span class="c">//2.<span class="cj">注册驱动</span></span></div>
<div class="code" style="left:107px;top:106px;">Class.<span class="i">forName</span>(<span class="s">"com.mysql.jdbc.Driver"</span>);</div>
<div class="code" style="left:107px;top:146px;"><span class="c">//3.<span class="cj">获取连接</span></span></div>
<div class="code" style="left:107px;top:166px;">Connection con = DriverManager.<span class="i">getConnection</span></div>
<div class="code" style="left:187px;top:186px;">(</div>
<div class="hint" style="left:199px;top:186.8px;width:36.5px;letter-spacing:1.0px">url:</div>
<div class="code" style="left:237.5px;top:186px;"><span class="s">"jdbc:mysql://localhost:3306/db06"</span>,</div>
<div class="hint" style="left:269px;top:206.8px;width:49.5px;letter-spacing:1.0px">user:</div>
<div class="code" style="left:321px;top:206px;"><span class="s">"root"</span>,</div>
<div class="hint" style="left:269px;top:226.8px;width:95px;letter-spacing:1.0px">password:</div>
<div class="code" style="left:366.5px;top:226px;"><span class="s">"root"</span>);</div>
<div class="code" style="left:107px;top:266px;"><span class="c">//4.<span class="cj">获取执行者对象</span></span></div>
<div class="code" style="left:107px;top:286px;">Statement stat = con.createStatement();</div>
<div class="code" style="left:107px;top:326px;"><span class="c">//5.<span class="cj">执行</span>sql<span class="cj">语句，并且接收结果</span></span></div>
<div class="code" style="left:107px;top:346px;">String sql = <span class="s">"</span><span style="background:#edfced"><span class="k">SELECT</span> * <span class="k">FROM</span> `user`</span><span class="s">"</span>;</div>
<div class="code" style="left:107px;top:366px;">ResultSet rs = stat.executeQuery(sql);</div>
<div class="code" style="left:107px;top:406px;"><span class="c">//6.<span class="cj">处理结果</span></span></div>
<div class="code" style="left:107px;top:426px;"><span class="k">while</span>(rs.next()) {</div>
<div class="code" style="left:147px;top:446px;">System.<span class="o">out</span>.println(rs.getInt(</div>
<div class="hint" style="left:439.4000000000001px;top:446.8px;width:123.59999999999991px;letter-spacing:1.0px">columnLabel:</div>
<div class="code" style="left:565px;top:446px;"><span class="s">"id"</span>) + <span class="s">"</span><span class="k">\t</span><span class="s">"</span></div>
<div class="code" style="left:227px;top:466px;">+ rs.getString(</div>
<div class="hint" style="left:379.5px;top:466.79999999999995px;width:123.0px;letter-spacing:1.0px">columnLabel:</div>
<div class="code" style="left:504.5999999999999px;top:466px;"><span class="s">"name"</span>));</div>
<div class="code" style="left:107px;top:486px;">}</div>
<div class="code" style="left:107px;top:526px;"><span class="c">//7.<span class="cj">释放资源</span></span></div>
<div class="code" style="left:107px;top:546px;">con.close();</div>
<div class="code" style="left:107px;top:566px;">stat.close();</div>
<div class="code" style="left:107px;top:586px;">rs.close();</div>
<div class="code" style="left:67px;top:606px;">}</div>
</div></div>
<svg class="ov" width="1787" height="831">
<rect x="132.40" y="29.00" width="153.20" height="47.30" fill="none" stroke="#ec1c24" stroke-width="4.0" stroke-linejoin="round"/>
<rect x="89.50" y="127.50" width="278.10" height="100.80" fill="none" stroke="#ec1c24" stroke-width="4.0" stroke-linejoin="round"/>
<rect x="135.30" y="452.20" width="135.40" height="21.80" fill="none" stroke="#ec1c24" stroke-width="4.0" stroke-linejoin="round"/>
<rect x="135.30" y="474.60" width="135.40" height="26.10" fill="none" stroke="#ec1c24" stroke-width="4.0" stroke-linejoin="round"/>
<rect x="130.20" y="634.00" width="136.80" height="26.50" fill="none" stroke="#ec1c24" stroke-width="4.0" stroke-linejoin="round"/>
<rect x="125.40" y="708.00" width="207.40" height="119.50" fill="none" stroke="#ec1c24" stroke-width="4.0" stroke-linejoin="round"/>
<rect x="831.10" y="161.30" width="415.00" height="24.10" fill="none" stroke="#e60012" stroke-width="1.8" stroke-linejoin="miter"/>
<rect x="821.90" y="223.10" width="500.80" height="83.40" fill="none" stroke="#e60012" stroke-width="1.8" stroke-linejoin="miter"/>
<rect x="827.30" y="322.10" width="492.40" height="51.80" fill="none" stroke="#e60012" stroke-width="1.8" stroke-linejoin="miter"/>
<rect x="832.30" y="420.90" width="475.40" height="32.80" fill="none" stroke="#e60012" stroke-width="1.8" stroke-linejoin="miter"/>
<rect x="831.30" y="480.30" width="796.40" height="92.00" fill="none" stroke="#e60012" stroke-width="1.8" stroke-linejoin="miter"/>
<path d="M390.5 21.6L302.5 44.6" stroke="#ec1c24" stroke-width="3.4" stroke-linecap="round"/><path d="M289.4 48.0L304.1 37.2L302.5 44.6L307.6 50.2z" fill="#ec1c24"/>
<path d="M395.5 175.0L373.0 182.3" stroke="#ec1c24" stroke-width="3.4" stroke-linecap="round"/><path d="M360.2 186.5L374.3 174.8L373.0 182.3L378.5 187.7z" fill="#ec1c24"/>
<path d="M348.0 442.0L287.6 452.2" stroke="#ec1c24" stroke-width="3.4" stroke-linecap="round"/><path d="M274.3 454.5L289.9 445.0L287.6 452.2L292.2 458.3z" fill="#ec1c24"/>
<path d="M340.8 504.4L284.1 497.4" stroke="#ec1c24" stroke-width="3.4" stroke-linecap="round"/><path d="M270.7 495.8L288.4 491.2L284.1 497.4L286.8 504.6z" fill="#ec1c24"/>
</svg>
<div class="an" id="a1" style="left:392.20px;top:16.30px;font-size:19.5px;letter-spacing:2.650px">执行器</div>
<div class="an" id="a2" style="left:400.40px;top:37.30px;font-size:19.5px;letter-spacing:3.350px"><span style="letter-spacing:0.437px">(</span>执行<span style="letter-spacing:0.437px">sql)</span></div>
<div class="an" id="a3" style="left:369.60px;top:144.90px;font-size:19.5px;letter-spacing:3.070px">事务相关的方法</div>
<div class="an" id="a4" style="left:361.60px;top:432.10px;font-size:19.5px;letter-spacing:2.307px">查询<span style="letter-spacing:0.341px"> DQL</span></div>
<div class="an" id="a5" style="left:351.90px;top:488.50px;font-size:19.5px;letter-spacing:2.206px">增删改<span style="letter-spacing:0.290px"> DML</span></div>
<div class="an" id="a6" style="left:345.50px;top:703.30px;font-size:19.5px;letter-spacing:2.989px"><span style="letter-spacing:0.206px">getXxx(</span>列<span style="letter-spacing:0.206px">)</span></div>
<div class="an" id="a7" style="left:1264.00px;top:148.10px;font-size:19.5px;letter-spacing:2.500px"><span style="letter-spacing:0.162px">//</span>利用<span style="letter-spacing:0.162px">driver</span>的静态代码块注册驱动<i>；</i></div>
<div class="an" id="a8" style="left:1353.50px;top:222.60px;font-size:19.5px;letter-spacing:2.967px">通过驱动管理器得到连接对象</div>
<div class="an" id="a9" style="left:1332.80px;top:336.70px;font-size:19.5px;letter-spacing:3.085px">根据连接对象，得到<span style="letter-spacing:0.255px">SQL</span>执行对象</div>
<div class="an" id="a10" style="left:1322.80px;top:416.80px;font-size:19.5px;letter-spacing:2.991px">执行对象，执行<span style="letter-spacing:-0.168px">sql</span>，得到结果集</div>
<div class="an" id="a11" style="left:1376.80px;top:527.90px;font-size:19.5px;letter-spacing:3.133px">遍历结果集，取出数据</div>
<div class="hl" style="left:125px;top:165px;width:88.0px;height:60.0px;background:#fffa80"></div>
<div class="hl" style="left:310px;top:450px;width:75.7px;height:25.5px;background:#fffa80"></div>
<div class="hl" style="left:314px;top:473px;width:34.8px;height:23.0px;background:#fffa80"></div>
<div class="hl" style="left:145px;top:636.4px;width:45.7px;height:19.6px;background:#fffa80"></div>
<div class="hl" style="left:148.6px;top:713px;width:80.4px;height:13.3px;background:#fffa80"></div>
<div class="hl" style="left:142.8px;top:802.6px;width:44.2px;height:23.8px;background:#fffa80"></div>
<div class="hl" style="left:828px;top:221px;width:129.0px;height:20.5px;background:#92d5a6"></div>
<div class="hl" style="left:998px;top:222.6px;width:140.8px;height:22.4px;background:#d2a5d4"></div>
<div class="hl" style="left:1385.7px;top:221px;width:126.0px;height:27.0px;background:#d2a5d4"></div>
<div class="hl" style="left:1543px;top:220.3px;width:101.8px;height:33.7px;background:#92d5a6"></div>
<div class="hl" style="left:829.5px;top:338px;width:100.5px;height:31.7px;background:#92d5a6"></div>
<div class="hl" style="left:1530.7px;top:333px;width:139.3px;height:27.6px;background:#92d5a6"></div>
<div class="hl" style="left:827.8px;top:420.4px;width:108.8px;height:28.3px;background:#92d5a6"></div>
<div class="hl" style="left:1030.6px;top:423px;width:168.4px;height:22.5px;background:#ffd3e1"></div>
<div class="hl" style="left:1429px;top:408.5px;width:89.0px;height:38.7px;background:#ffd3e1"></div>
<div class="hl" style="left:1582.3px;top:411.2px;width:79.7px;height:23.6px;background:#92d5a6"></div>
<div class="hl" style="left:887.5px;top:481px;width:83.5px;height:20.0px;background:#fffa80"></div>
<div class="hl" style="left:1061px;top:503px;width:110.5px;height:23.4px;background:#fffa80"></div>
<div class="hl" style="left:972px;top:520px;width:129.7px;height:27.0px;background:#fffa80"></div>
<div class="abs" style="position:absolute;left:0;top:0;width:1787px;height:831px;border-style:solid;border-color:#b97453;border-width:1px 2px 2px 1px;pointer-events:none"></div>
</body></html>
